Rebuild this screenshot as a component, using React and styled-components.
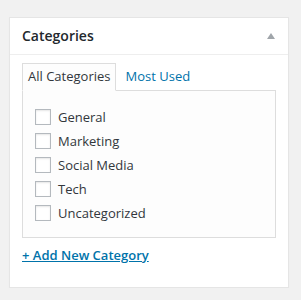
import React, { useState } from "react";
import styled, { createGlobalStyle } from "styled-components";

const GlobalStyle = createGlobalStyle`
  body {
    margin: 0;
    background: #f1f1f1;
    font-family: "Open Sans", "Liberation Sans", sans-serif;
    font-size: 13px;
    color: #444;
  }
`;

const PostBox = styled.div`
  margin: 17px 12px 0 9px;
  background: #fff;
  border: 1px solid #e5e5e5;
  box-shadow: 0 1px 1px rgba(0, 0, 0, 0.04);
`;

const BoxHeader = styled.div`
  display: flex;
  align-items: center;
  justify-content: space-between;
  padding: 8px 12px;
  border-bottom: 1px solid #eee;
`;

const Title = styled.h2`
  margin: 0;
  font-size: 14px;
  line-height: 20px;
  font-weight: 600;
  color: #23282d;
`;

const Toggle = styled.svg`
  width: 8px;
  height: 6px;
  margin-right: 1px;
  margin-top: -1px;
  fill: #a0a5aa;
`;

const Inside = styled.div`
  padding: 8px 12px 12px;
`;

const TabBar = styled.ul`
  display: flex;
  margin: 0 0 -1px;
  padding: 0;
  list-style: none;
  position: relative;
`;

const Tab = styled.li`
  padding: 3px 5px 5px;
  margin-right: 3px;
  line-height: 18px;
  border: 1px solid ${(p) => (p.active ? "#ddd" : "transparent")};
  border-bottom: 1px solid ${(p) => (p.active ? "#fdfdfd" : "transparent")};
  background: ${(p) => (p.active ? "#fdfdfd" : "transparent")};
  color: ${(p) => (p.active ? "#32373c" : "#0073aa")};
  cursor: pointer;
`;

const TabPanel = styled.div`
  border: 1px solid #ddd;
  background: #fdfdfd;
  padding: 0 12px;
`;

const CheckList = styled.ul`
  margin: 14px 0 12px;
  padding: 0;
  list-style: none;
`;

const CheckItem = styled.li`
  display: flex;
  align-items: center;
  height: 24px;
  color: #32373c;
`;

const Box = styled.span`
  box-sizing: border-box;
  width: 16px;
  height: 16px;
  border: 1px solid #b4b9be;
  background: #fff;
  box-shadow: inset 0 1px 2px rgba(0, 0, 0, 0.1);
  margin-right: 7px;
`;

const AddLink = styled.a`
  display: inline-block;
  margin: 8px 0 9px;
  line-height: 19.5px;
  font-weight: 600;
  color: #0073aa;
  text-decoration: underline;
  cursor: pointer;
`;

const categories = ["General", "Marketing", "Social Media", "Tech", "Uncategorized"];

export default function App() {
  const [tab, setTab] = useState("all");

  return (
    <>
      <GlobalStyle />
      <PostBox>
        <BoxHeader>
          <Title>Categories</Title>
          <Toggle viewBox="0 0 8 6">
            <polygon points="4,0 8,6 0,6" />
          </Toggle>
        </BoxHeader>
        <Inside>
          <TabBar>
            <Tab active={tab === "all"} onClick={() => setTab("all")}>
              All Categories
            </Tab>
            <Tab active={tab === "pop"} onClick={() => setTab("pop")}>
              Most Used
            </Tab>
          </TabBar>
          <TabPanel>
            <CheckList>
              {categories.map((c) => (
                <CheckItem key={c}>
                  <Box />
                  {c}
                </CheckItem>
              ))}
            </CheckList>
          </TabPanel>
          <AddLink>+ Add New Category</AddLink>
        </Inside>
      </PostBox>
    </>
  );
}
